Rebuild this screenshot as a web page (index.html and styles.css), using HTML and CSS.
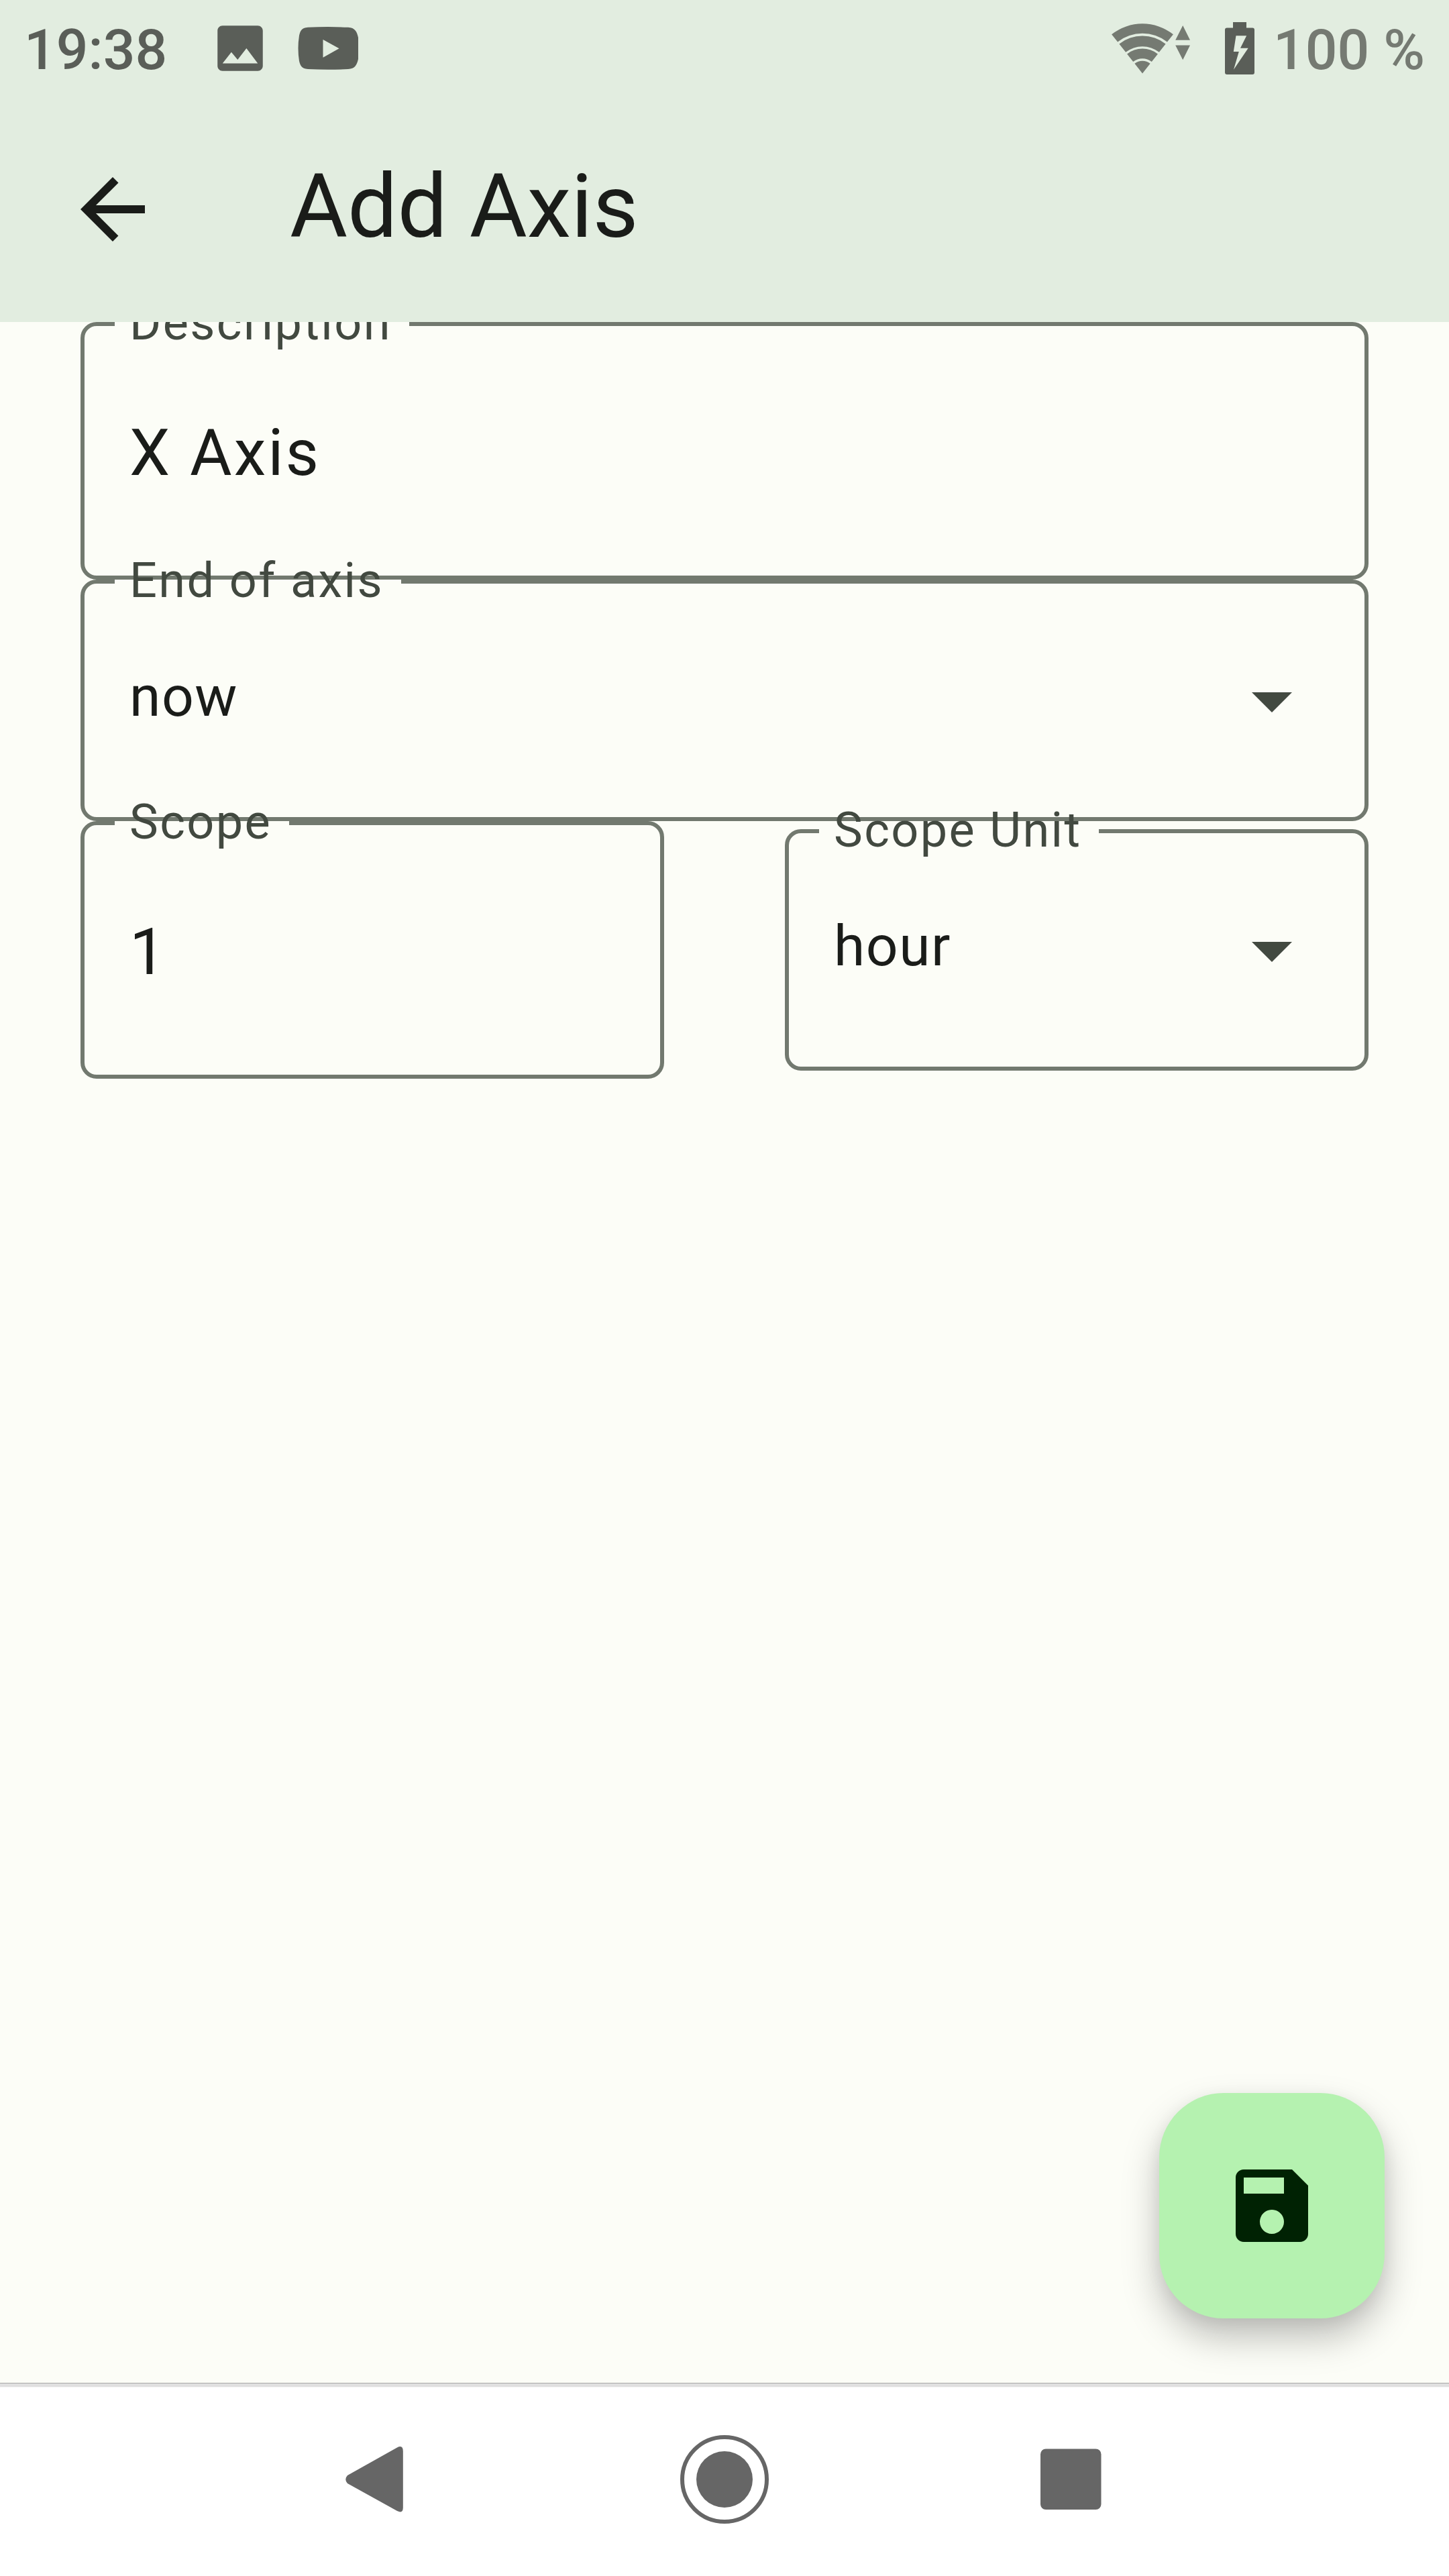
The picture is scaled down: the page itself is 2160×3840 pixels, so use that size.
FILE: index.html
```html
<!DOCTYPE html>
<html lang="en">
<head>
<meta charset="utf-8">
<title>Add Axis</title>
<link rel="stylesheet" href="styles.css">
</head>
<body>
<div class="screen">
  <header class="top">
    <div class="status">
      <span class="clock">19:38</span>
      <svg class="photo" viewBox="0 0 24 24"><path d="M21 19V5c0-1.1-.9-2-2-2H5c-1.1 0-2 .9-2 2v14c0 1.1.9 2 2 2h14c1.1 0 2-.9 2-2zM8.5 13.5l2.5 3.01L14.5 12l4.5 6H5l3.5-4.5z"/></svg>
      <svg class="video" viewBox="0 0 90 64"><path fill-rule="evenodd" d="M15 .8Q45-.6 75 .8C85 1.300 88 7 90 16V48C88 57 85 62.500 75 63Q45 64.600 15 63C5 62.500 3.500 57 2 51Q-1 32 2 13C3.500 7 5 1.300 15 .8ZM37.500 19V45.700L61.500 32.300Z"/></svg>
      <span class="spacer"></span>
      <svg class="wifi" viewBox="-46 -74.500 117 75">
        <path d="M-45.900-58.300A74.200 74.200 0 0 1 45.900-58.300L36.900-46.900A59.700 59.700 0 0 0-36.900-46.900Z"/>
        <path d="M-34.600-44A56 56 0 0 1 34.600-44L24.900-31.700A40.300 40.300 0 0 0-24.900-31.700Z"/>
        <path d="M-22.900-29.100A37 37 0 0 1 22.900-29.100L13.800-17.500A22.300 22.300 0 0 0-13.800-17.500Z"/>
        <path d="M-11.600-14.700A18.700 18.700 0 0 1 11.600-14.700L0 0Z"/>
        <path d="M60.200-71.500L71-49.700H49.200ZM49.200-42H71L60.200-20.200Z"/>
      </svg>
      <svg class="battery" viewBox="0 0 44 78"><path fill-rule="evenodd" d="M12 0H32V8.500H41Q44 8.500 44 11.500V75Q44 78 41 78H3Q0 78 0 75V11.500Q0 8.500 3 8.500H12ZM16.500 20.300L12.800 44H20.800L13 70.700L34.700 38.700H23L32.200 20.300Z"/></svg>
      <span class="level">100 %</span>
    </div>
    <div class="appbar">
      <svg class="icon" viewBox="0 0 24 24"><path d="M20 11H7.830l5.590-5.590L12 4l-8 8 8 8 1.410-1.410L7.830 13H20v-2z"/></svg>
      <h1 class="title">Add Axis</h1>
    </div>
  </header>

  <main class="form">
    <fieldset class="field input">
      <legend class="label">Description</legend>
      <span class="value">X Axis</span>
    </fieldset>
    <fieldset class="field select">
      <legend class="label">End of axis</legend>
      <span class="value">now</span>
      <svg class="icon caret" viewBox="0 0 24 24"><path d="M7 10l5 5 5-5z"/></svg>
    </fieldset>
    <div class="row">
      <fieldset class="field input">
        <legend class="label">Scope</legend>
        <span class="value">1</span>
      </fieldset>
      <fieldset class="field select">
        <legend class="label">Scope Unit</legend>
        <span class="value">hour</span>
        <svg class="icon caret" viewBox="0 0 24 24"><path d="M7 10l5 5 5-5z"/></svg>
      </fieldset>
    </div>
    <button class="fab" aria-label="Save">
      <svg class="icon" viewBox="0 0 24 24"><path d="M17 3H5c-1.110 0-2 .9-2 2v14c0 1.100.89 2 2 2h14c1.100 0 2-.9 2-2V7l-4-4zm-5 16c-1.660 0-3-1.340-3-3s1.340-3 3-3 3 1.340 3 3-1.340 3-3 3zm3-10H5V5h10v4z"/></svg>
    </button>
  </main>

  <nav class="nav">
    <svg class="icon" viewBox="0 0 144 144"><path d="M26 66L100 24.500Q108.800 20 108.800 30V114Q108.800 123.500 100 119L26 78Q20.500 72 26 66Z"/></svg>
    <svg class="icon" viewBox="0 0 144 144"><circle cx="72" cy="72" r="42"/><circle cx="72" cy="72" r="63" fill="none" stroke="#666" stroke-width="6"/></svg>
    <svg class="icon" viewBox="0 0 144 144"><rect x="27" y="26.500" width="90.500" height="90.500" rx="8"/></svg>
  </nav>
</div>
</body>
</html>
```
FILE: styles.css
```css
* {
  box-sizing: border-box;
}

body {
  margin: 0;
  font-family: Roboto, sans-serif;
}

svg {
  display: block;
  flex: none;
  fill: currentColor;
}

.screen {
  display: flex;
  flex-direction: column;
  width: 2160px;
  height: 3840px;
  overflow: hidden;
  background: #fcfdf7;
  color: #1a1c19;
}

.icon {
  width: 144px;
  height: 144px;
}

/* Status bar and app bar share one tinted surface */
.top {
  position: relative;
  z-index: 1;
  height: 480px;
  background: #e2ede0;
}

.status {
  display: flex;
  align-items: center;
  height: 144px;
  padding: 0 36px;
  font-size: 84px;
  font-weight: 500;
  line-height: 98px;
  color: #5a5e58;
}

.clock,
.level {
  padding-top: 6px;
  white-space: nowrap;
}

.photo {
  width: 90px;
  height: 90px;
  margin-left: 64px;
}

.video {
  width: 90px;
  height: 64px;
  margin-left: 41px;
}

.spacer {
  flex: 1;
}

.wifi {
  width: 117px;
  height: 75px;
  margin-right: 52px;
  color: #757a72;
}

.battery {
  width: 44px;
  height: 78px;
  margin-right: 28px;
}

.level {
  color: #757a72;
}

.appbar {
  display: flex;
  align-items: center;
  gap: 192px;
  height: 336px;
  padding: 0 96px;
}

.title {
  margin: 0;
  padding-bottom: 8px;
  font-size: 132px;
  font-weight: 400;
  line-height: 168px;
}

/* Outlined form fields, stacked edge to edge */
.form {
  position: relative;
  flex: 1;
  padding: 0 120px;
}

.field {
  display: flex;
  justify-content: space-between;
  flex: 1;
  min-width: 0;
  margin: 0;
  padding: 0 66px 0 45px;
  border: 6px solid #72796f;
  border-radius: 24px;
}

.input {
  height: 384px;
}

.select {
  height: 360px;
}

.label {
  height: 6px;
  padding: 0 26px 0 22px;
  font-size: 72px;
  line-height: 3px;
  letter-spacing: 2.4px;
  white-space: nowrap;
  color: #424940;
}

.value {
  padding-left: 22px;
}

.input .value {
  padding-top: 117px;
  font-size: 96px;
  line-height: 144px;
  letter-spacing: 3px;
}

.select .value {
  padding-top: 109px;
  font-size: 84px;
  line-height: 120px;
  letter-spacing: 1.5px;
}

.caret {
  margin-top: 102px;
  color: #424940;
}

.row {
  display: flex;
  align-items: center;
  gap: 180px;
}

.fab {
  position: absolute;
  right: 96px;
  bottom: 96px;
  display: flex;
  align-items: center;
  justify-content: center;
  width: 336px;
  height: 336px;
  padding: 0;
  border: 0;
  border-radius: 96px;
  background: #b5f2b0;
  color: #002203;
  box-shadow: 0 28px 54px rgba(0, 0, 0, 0.25), 0 6px 24px rgba(0, 0, 0, 0.06);
}

/* System navigation */
.nav {
  display: flex;
  align-items: center;
  justify-content: center;
  gap: 372px;
  height: 288px;
  background: #fff;
  color: #666;
  box-shadow: inset 0 1px #a8a9a7, inset 0 6px #e0e0e0, inset 0 7px #f5f5f5;
}
```
